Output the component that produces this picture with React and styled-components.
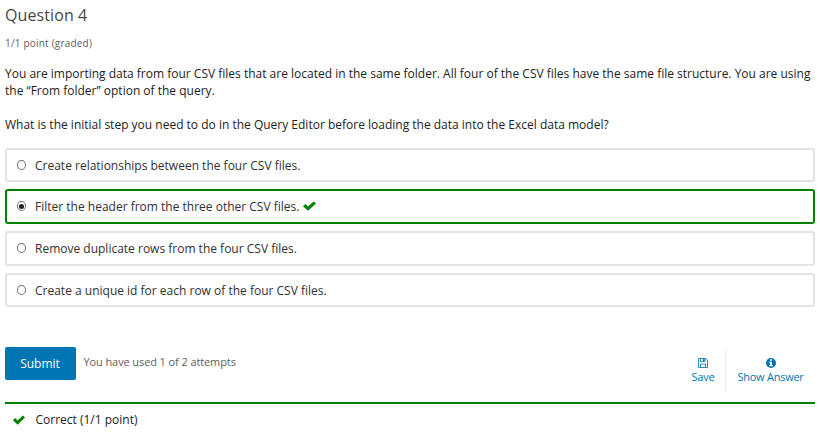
import React from "react";
import styled, { createGlobalStyle } from "styled-components";

const Global = createGlobalStyle`
  *{box-sizing:border-box}
  body{margin:0;background:#fff;color:#222;font-family:"Open Sans",Arial,sans-serif;font-size:12px;overflow:hidden}
`;
const Problem = styled.main`width:820px;height:435px;padding:0 5px;`;
const Title = styled.h3`margin:0;padding-top:4px;font-size:16px;line-height:22px;font-weight:400;letter-spacing:.1px;color:#474747;`;
const Progress = styled.div`margin-top:9px;font-size:10px;line-height:16px;letter-spacing:.2px;color:#5e5e5e;`;
const Prompt = styled.div`padding-top:14px;`;
const Paragraph = styled.p`margin:0 0 17px;line-height:17px;white-space:nowrap;`;
const Line = styled.span`display:block;width:max-content;`;
const Choices = styled.div`display:grid;grid-template-rows:34px 35px 35px 34px;gap:7px;margin-top:-2px;`;
const Choice = styled.label`display:flex;align-items:center;padding-left:10px;color:#313131;border:2px solid ${p => p.$correct ? "#008100" : "#e3e3e3"};border-radius:3px;`;
const Radio = styled.span`width:9px;height:10px;border:1px solid #707070;border-radius:50%;margin:0 9px 1px 0;display:grid;place-items:center;&::after{content:"";width:5px;height:5px;border-radius:50%;background:${p => p.$on ? "#222" : "transparent"};}`;
const Check = styled.svg`width:${p => p.$w || 12}px;height:10px;fill:#008100;`;
const ChoiceMark = styled.span`display:flex;margin:0 0 1px 4px;`;
const Actions = styled.div`display:flex;margin-top:40px;height:45px;`;
const Submit = styled.button`width:71px;height:33px;border:0;border-radius:2px;background:#0075b4;color:#fff;font:12px "Open Sans",sans-serif;padding:0 1px 0 0;`;
const Attempts = styled.span`margin:6px 0 0 7.5px;font-size:11px;line-height:18px;letter-spacing:-.1px;color:#5e5e5e;`;
const Tools = styled.div`display:flex;margin:2px 0 0 auto;`;
const Tool = styled.button`width:${p => p.$w}px;height:43px;border:0;border-left:${p => p.$line ? "1px solid #eee" : "0"};background:none;color:#0075b4;font:11px/14px "Open Sans",sans-serif;letter-spacing:-.25px;padding:9px 0 0;display:flex;flex-direction:column;align-items:center;gap:2px;svg{display:block}`;
const Feedback = styled.div`display:flex;align-items:center;border-top:2px solid #008100;margin-top:10px;height:33px;padding-left:8px;`;
const FeedbackText = styled.span`margin-left:10.5px;`;
const Mark = ({ width }) => <Check $w={width} viewBox="0 0 12 10" preserveAspectRatio="none"><path d="M0 5.2 2.2 3.1 4.6 5.5 9.8.4 12 2.5 4.6 9.7Z"/></Check>;
const answers = ["Create relationships between the four CSV files.", "Filter the header from the three other CSV files.", "Remove duplicate rows from the four CSV files.", "Create a unique id for each row of the four CSV files."];

export default function App() {
  return <Problem><Global />
    <Title>Question 4</Title><Progress>1/1 point (graded)</Progress>
    <Prompt><Paragraph><Line>You are importing data from four CSV files that are located in the same folder. All four of the CSV files have the same file structure. You are using</Line><Line>the “From folder” option of the query.</Line></Paragraph>
    <Paragraph><Line>What is the initial step you need to do in the Query Editor before loading the data into the Excel data model?</Line></Paragraph></Prompt>
    <Choices>{answers.map((a,i)=><Choice key={a} $correct={i===1}><Radio $on={i===1}/><Line>{a}</Line>{i===1&&<ChoiceMark><Mark width={13}/></ChoiceMark>}</Choice>)}</Choices>
    <Actions><Submit>Submit</Submit><Attempts>You have used 1 of 2 attempts</Attempts><Tools>
      <Tool $w={44}><svg width="10" height="10" viewBox="0 0 10 10" fill="none" stroke="currentColor"><path strokeWidth=".8" d="M.5.5H8L9.5 2V9.5H.5ZM2.5.5V3.5H7V.5M2.5 9.5V6H7.5V9.5"/><path fill="currentColor" stroke="none" d="M5 1H6.5V3H5Z"/></svg>Save</Tool>
      <Tool $w={90} $line><svg width="10" height="10" viewBox="0 0 10 10"><circle cx="5" cy="5" r="5" fill="currentColor"/><path fill="#fff" d="M4 1.2H6V2.8H4ZM3.3 3.8H6V7H6.8V8.2H3.2V7H4.1V5H3.3Z"/></svg>Show Answer</Tool>
    </Tools></Actions>
    <Feedback><Mark/><FeedbackText>Correct (1/1 point)</FeedbackText></Feedback>
  </Problem>;
}
